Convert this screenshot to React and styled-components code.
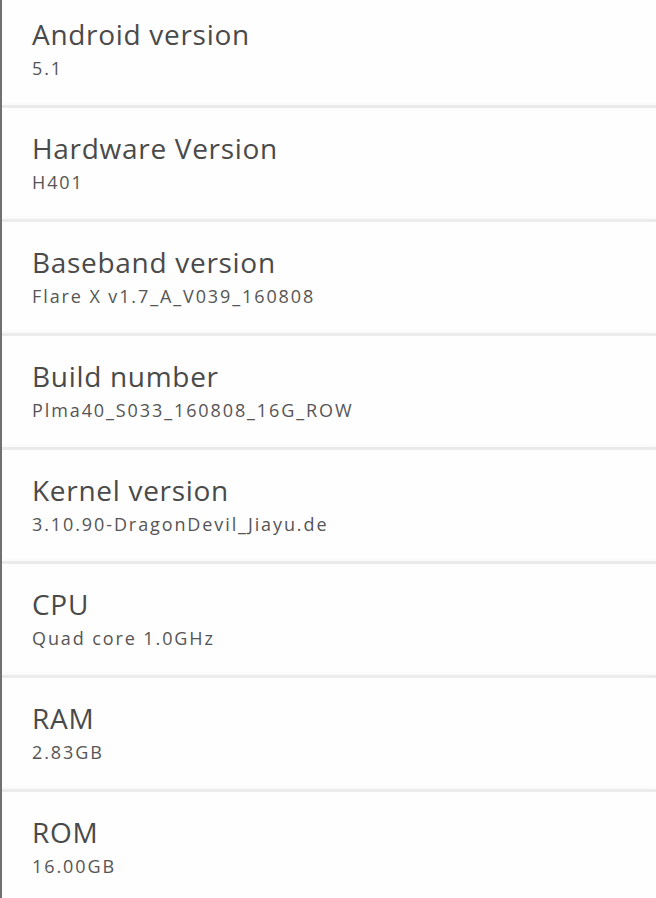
import React from "react";
import styled, { createGlobalStyle } from "styled-components";

const Global = createGlobalStyle`
  html, body { margin: 0; padding: 0; background: #fefefe; }
  body { font-family: "Open Sans", "DejaVu Sans", sans-serif; }
`;

const Screen = styled.div`
  width: 656px;
  height: 898px;
  overflow: hidden;
  background: #fefefe;
  border-left: 2px solid #707070;
  box-sizing: border-box;
`;

const List = styled.div`
  margin-top: -6px;
  display: flex;
  flex-direction: column;
`;

const Row = styled.div`
  height: 111px;
  flex: none;
  box-sizing: border-box;
  padding: 24px 0 0 30px;
  display: flex;
  flex-direction: column;
  gap: 7px;
`;

const Divider = styled.div`
  height: 3px;
  flex: none;
  background: #ebebeb;
  box-shadow: 0 -2px 3px rgba(0, 0, 0, 0.025);
`;

const Title = styled.div`
  font-size: 28px;
  line-height: 32px;
  letter-spacing: 0.7px;
  color: #4a4a4a;
`;

const Summary = styled.div`
  font-size: 18px;
  line-height: 22px;
  color: #555;
  letter-spacing: 1.9px;
`;

const items = [
  ["Android version", "5.1"],
  ["Hardware Version", "H401"],
  ["Baseband version", "Flare X v1.7_A_V039_160808"],
  ["Build number", "Plma40_S033_160808_16G_ROW"],
  ["Kernel version", "3.10.90-DragonDevil_Jiayu.de"],
  ["CPU", "Quad core 1.0GHz"],
  ["RAM", "2.83GB"],
  ["ROM", "16.00GB"],
];

export default function App() {
  return (
    <>
      <Global />
      <Screen>
        <List>
          {items.map(([t, s], i) => (
            <React.Fragment key={t}>
              <Row>
                <Title>{t}</Title>
                <Summary>{s}</Summary>
              </Row>
              {i < items.length - 1 && <Divider />}
            </React.Fragment>
          ))}
        </List>
      </Screen>
    </>
  );
}
